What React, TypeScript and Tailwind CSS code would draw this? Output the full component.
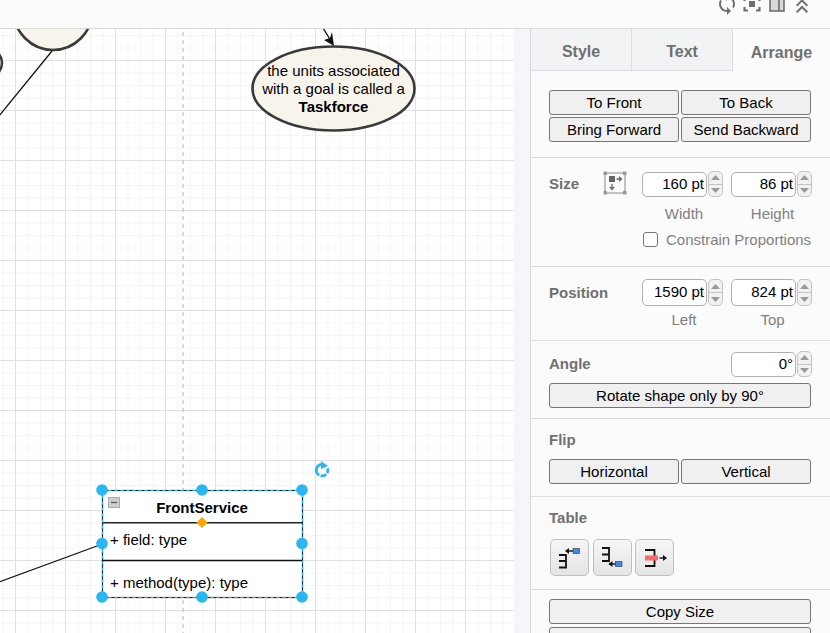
import { MdSync, MdKeyboardDoubleArrowUp } from 'react-icons/md'
import type { ReactNode } from 'react'

const handles = [
  [102, 490],
  [202, 490],
  [302, 490],
  [102, 543.5],
  [302, 543.5],
  [102, 597],
  [202, 597],
  [302, 597]
]

function Btn({ children, className = '' }: { children: ReactNode; className?: string }) {
  return (
    <button className={`h-[25px] bg-[#f0f0f0] border border-[#767676] rounded-[3px] text-black text-[15px] leading-none ${className}`}>
      {children}
    </button>
  )
}

function Spinner({ tall }: { tall?: boolean }) {
  return (
    <div className={`w-[15px] flex flex-col border border-[#c4c4c4] rounded-[5px] bg-[#f1f1f1] overflow-hidden shrink-0 ${tall ? 'h-[27px]' : 'h-[26px]'}`}>
      <div className="flex-1 flex items-center justify-center border-b border-[#c4c4c4]">
        <svg width="11" height="7" viewBox="0 0 11 7">
          <path d="M5.5 1 L10 6 H1 Z" fill="#9a9a9a" />
        </svg>
      </div>
      <div className="flex-1 flex items-center justify-center">
        <svg width="11" height="7" viewBox="0 0 11 7">
          <path d="M1 1 H10 L5.5 6 Z" fill="#9a9a9a" />
        </svg>
      </div>
    </div>
  )
}

function NumInput({ value, tall }: { value: string; tall?: boolean }) {
  return (
    <div className="flex gap-px items-center">
      <div className={`w-[65px] bg-white border border-[#b0b0b0] rounded-[5px] flex items-center justify-end pr-[2px] text-[15px] text-black ${tall ? 'h-[27px]' : 'h-[25px]'}`}>
        {value}
      </div>
      <Spinner tall={tall} />
    </div>
  )
}

function SectionTitle({ children, className = '' }: { children: ReactNode; className?: string }) {
  return <div className={`text-[15px] font-bold text-[#707070] leading-none ${className}`}>{children}</div>
}

function Hint({ children, className = '' }: { children: ReactNode; className?: string }) {
  return <div className={`text-[15px] text-[#808080] leading-none text-center ${className}`}>{children}</div>
}

function TableBtn({ children }: { children: ReactNode }) {
  return (
    <button className="w-[39px] h-[37px] flex items-center justify-center rounded-[5px] border border-[#c0c0c0] bg-gradient-to-b from-[#f6f6f6] to-[#e4e4e4]">
      {children}
    </button>
  )
}

function Diagram() {
  return (
    <svg className="absolute left-0 top-[-29px] w-[514px] h-[633px]" viewBox="0 0 514 633">
      <line x1="183" y1="32" x2="183" y2="633" stroke="#d0d0d0" strokeWidth="1.6" strokeDasharray="4 4" />
      <ellipse cx="53" cy="10" rx="39.5" ry="40" fill="#f7f4ec" stroke="#3a3a3a" strokeWidth="2.6" />
      <ellipse cx="-42" cy="63" rx="44" ry="24" fill="#f7f4ec" stroke="#3a3a3a" strokeWidth="2.6" />
      <line x1="52" y1="51" x2="-1" y2="116" stroke="#111" strokeWidth="1.3" />
      <line x1="323" y1="28" x2="331" y2="41" stroke="#111" strokeWidth="1.3" />
      <path d="M334 46 L324 40 L330 38 L332 32 Z" fill="#111" />
      <ellipse cx="333.5" cy="88.5" rx="81" ry="42" fill="#f7f4ec" stroke="#3a3a3a" strokeWidth="2.6" />
      <line x1="-1" y1="582" x2="97" y2="546" stroke="#111" strokeWidth="1.3" />

      <rect x="102.5" y="490.5" width="200" height="107" fill="#fff" stroke="#222" strokeWidth="1.2" />
      <line x1="102" y1="522.8" x2="302" y2="522.8" stroke="#222" strokeWidth="1.4" />
      <line x1="102" y1="560.5" x2="302" y2="560.5" stroke="#111" strokeWidth="1.3" />
      <rect x="102.5" y="490.5" width="200" height="107" fill="none" stroke="#29b6f2" strokeWidth="1.2" strokeDasharray="3 3" />

      <rect x="108.5" y="497.5" width="11" height="10" fill="#c9ced3" stroke="#a8adb2" />
      <line x1="111" y1="502.5" x2="117" y2="502.5" stroke="#555" strokeWidth="1.2" />

      <path d="M202 517 L207.5 522.5 L202 528 L196.5 522.5 Z" fill="#ffa500" />
      {handles.map(([cx, cy]) => (
        <circle key={`${cx}-${cy}`} cx={cx} cy={cy} r="5.8" fill="#29b6f2" />
      ))}
      <path
        d="M322 464.3 A5.8 5.8 0 1 0 327.6 468.5"
        fill="none"
        stroke="#29b6f2"
        strokeWidth="2.8"
        strokeDasharray="15 1.4 6 1.4 20"
      />
      <path d="M321 461 L328 466 L321 469 Z" fill="#29b6f2" />
    </svg>
  )
}

function CanvasText({ className, children }: { className: string; children: ReactNode }) {
  return <div className={`absolute text-[15px] text-black leading-[18px] whitespace-nowrap ${className}`}>{children}</div>
}

export default function App() {
  return (
    <div className="w-[830px] h-[633px] overflow-hidden flex flex-col bg-[#fbfbfb] font-['Liberation_Sans',Arial,sans-serif]">
      <div className="h-[29px] shrink-0 bg-[#fbfbfb] border-b border-[#dadada] overflow-hidden flex justify-end gap-px pr-[16px] text-[#6f6f6f]">
        <MdSync className="w-6 h-6 -mt-[8px]" />
        <svg className="w-6 h-6 -mt-[8px]" viewBox="0 0 24 24" fill="none" stroke="currentColor" strokeWidth="2.2">
          <path d="M4.5 9V5.5H8M16 5.5h3.5V9M4.5 15v3.5H8M16 18.5h3.5V15" />
          <rect x="9" y="9" width="6" height="6" fill="currentColor" stroke="none" />
        </svg>
        <svg className="w-6 h-6 -mt-[9px]" viewBox="0 0 24 24" fill="none" stroke="currentColor" strokeWidth="1.6">
          <rect x="5" y="4" width="14" height="16" fill="#d8d8d8" />
          <line x1="14" y1="4" x2="14" y2="20" />
        </svg>
        <MdKeyboardDoubleArrowUp className="w-6 h-6 -mt-[6px]" />
      </div>

      <div className="flex flex-1 min-h-0">
        <div className="w-[530px] shrink-0 bg-[#f5f6fa]">
          <div className="relative w-[514px] h-full overflow-hidden bg-white [background-image:linear-gradient(#e0e0e0_1px,transparent_1px),linear-gradient(90deg,#e0e0e0_1px,transparent_1px),linear-gradient(#f5f5f5_1px,transparent_1px),linear-gradient(90deg,#f5f5f5_1px,transparent_1px)] [background-size:50px_50px,50px_50px,12.5px_12.5px,12.5px_12.5px] [background-position:15px_31px,15px_31px,15px_6px,15px_6px]">
            <Diagram />
            <CanvasText className="left-[252px] w-[163px] top-[33px] text-center">
              the units associated
              <br />
              with a goal is called a
              <br />
              <b>Taskforce</b>
            </CanvasText>
            <CanvasText className="left-[102px] w-[200px] top-[470px] text-center font-bold">FrontService</CanvasText>
            <CanvasText className="left-[110px] top-[502px]">+ field: type</CanvasText>
            <CanvasText className="left-[110px] top-[545px]">+ method(type): type</CanvasText>
          </div>
        </div>

        <div className="w-[300px] shrink-0 border-l border-[#d8d8dc] bg-[#fbfbfb] flex flex-col min-h-0 overflow-hidden">
          <div className="flex h-[42px] shrink-0 text-[16px] font-bold text-[#707070]">
            <div className="w-[101px] flex items-center justify-center pt-[4px] bg-[#f1f3f4] border-r border-b border-[#dadce0]">Style</div>
            <div className="w-[101px] flex items-center justify-center pt-[4px] bg-[#f1f3f4] border-r border-b border-[#dadce0]">Text</div>
            <div className="flex-1 flex items-center justify-center pt-[6px]">Arrange</div>
          </div>

          <div className="h-[87px] shrink-0 border-b border-[#dfdfdf] pt-[19px] pl-[18px] grid grid-cols-[130px_130px] gap-x-[2px] gap-y-[2px] content-start">
            <Btn>To Front</Btn>
            <Btn>To Back</Btn>
            <Btn>Bring Forward</Btn>
            <Btn>Send Backward</Btn>
          </div>

          <div className="h-[109px] shrink-0 border-b border-[#dfdfdf] pl-[18px] pt-[13px]">
            <div className="flex items-center">
              <SectionTitle className="w-[54px] -mt-[2px]">Size</SectionTitle>
              <svg width="24" height="24" viewBox="0 0 24 24" className="-mt-[2px]" fill="none">
                <rect x="2" y="2" width="20" height="20" stroke="#8a8a8a" strokeWidth="1" />
                <rect x="0.5" y="0.5" width="3.5" height="3.5" fill="#999" />
                <rect x="20" y="0.5" width="3.5" height="3.5" fill="#999" />
                <rect x="0.5" y="20" width="3.5" height="3.5" fill="#999" />
                <rect x="20" y="20" width="3.5" height="3.5" fill="#999" />
                <rect x="6" y="5" width="6" height="6" fill="#666" />
                <path d="M13.5 8 H18 M16 5.8 L18.5 8 L16 10.2" stroke="#666" strokeWidth="1.3" />
                <path d="M9 13 V18 M6.8 15.8 L9 18.5 L11.2 15.8" stroke="#666" strokeWidth="1.3" />
              </svg>
              <div className="ml-[15px] flex gap-[8px]">
                <NumInput value="160 pt" />
                <NumInput value="86 pt" />
              </div>
            </div>
            <div className="flex pl-[93px] mt-[9px]">
              <Hint className="w-[84px]">Width</Hint>
              <Hint className="w-[89px] ml-[5px] -translate-x-[3px]">Height</Hint>
            </div>
            <div className="flex items-center pl-[94px] mt-[11px]">
              <div className="w-[15px] h-[15px] border border-[#767676] rounded-[3px] bg-white shrink-0" />
              <span className="ml-[8px] text-[15px] text-[#808080] leading-none whitespace-nowrap">Constrain Proportions</span>
            </div>
          </div>

          <div className="h-[74px] shrink-0 border-b border-[#dfdfdf] pl-[18px] pt-[12px]">
            <div className="flex items-center">
              <SectionTitle className="w-[93px]">Position</SectionTitle>
              <div className="flex gap-[8px]">
                <NumInput value="1590 pt" tall />
                <NumInput value="824 pt" tall />
              </div>
            </div>
            <div className="flex pl-[93px] mt-[6px]">
              <Hint className="w-[84px]">Left</Hint>
              <Hint className="w-[89px] ml-[2px]">Top</Hint>
            </div>
          </div>

          <div className="h-[78px] shrink-0 border-b border-[#dfdfdf] pl-[18px] pt-[10px]">
            <div className="flex items-center justify-between w-[263px]">
              <SectionTitle className="-mt-[2px]">Angle</SectionTitle>
              <NumInput value="0°" />
            </div>
            <Btn className="w-[262px] mt-[6px]">Rotate shape only by 90°</Btn>
          </div>

          <div className="h-[78px] shrink-0 border-b border-[#dfdfdf] pl-[18px] pt-[13px]">
            <SectionTitle>Flip</SectionTitle>
            <div className="grid grid-cols-[130px_130px] gap-x-[2px] mt-[12px]">
              <Btn>Horizontal</Btn>
              <Btn>Vertical</Btn>
            </div>
          </div>

          <div className="h-[93px] shrink-0 border-b border-[#dfdfdf] pl-[18px] pt-[13px]">
            <SectionTitle>Table</SectionTitle>
            <div className="flex gap-[3.5px] ml-px mt-[14px]">
              <TableBtn>
                <svg width="30" height="28" viewBox="0 0 30 28" fill="none">
                  <path d="M4 11 H11 V23.5 H4 M4 17 H11" stroke="#111" strokeWidth="1.8" />
                  <path d="M11 7 H18" stroke="#111" strokeWidth="1.4" />
                  <path d="M10 7 L14 4 V10 Z" fill="#111" />
                  <rect x="18" y="4.5" width="6.5" height="5" fill="#3f86f0" stroke="#333" strokeWidth="0.6" />
                </svg>
              </TableBtn>
              <TableBtn>
                <svg width="30" height="28" viewBox="0 0 30 28" fill="none">
                  <path d="M5 4 H12 V17 H5 M5 10.5 H12" stroke="#111" strokeWidth="1.8" />
                  <path d="M12 20 H19" stroke="#111" strokeWidth="1.4" />
                  <path d="M11.5 20 L15.5 17 V23 Z" fill="#111" />
                  <rect x="18.5" y="17.5" width="6.5" height="5" fill="#3f86f0" stroke="#333" strokeWidth="0.6" />
                </svg>
              </TableBtn>
              <TableBtn>
                <svg width="30" height="28" viewBox="0 0 30 28" fill="none">
                  <path d="M5 6 H14.5 V22 H5" stroke="#111" strokeWidth="1.8" />
                  <rect x="5" y="11.5" width="13" height="5" fill="#f56a6a" />
                  <path d="M19.5 14 H26" stroke="#111" strokeWidth="1.4" />
                  <path d="M27 14 L23 11 V17 Z" fill="#111" />
                </svg>
              </TableBtn>
            </div>
          </div>

          <div className="pl-[18px] pt-[9px] flex flex-col gap-[3px]">
            <Btn className="w-[262px] h-[24px]">Copy Size</Btn>
            <Btn className="w-[262px] h-[24px] shrink-0">&nbsp;</Btn>
          </div>
        </div>
      </div>
    </div>
  )
}
